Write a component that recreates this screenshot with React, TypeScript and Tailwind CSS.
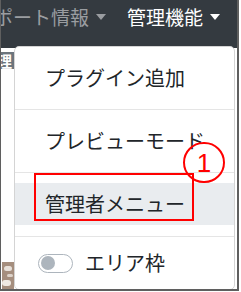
import { useState } from 'react';

const jp = { fontFamily: '"Noto Sans CJK JP", "Noto Sans", sans-serif' };

function Caret({ color }: { color: string }) {
  return (
    <span
      className={`ml-[7px] inline-block h-0 w-0 border-x-[5.5px] border-t-[6px] border-x-transparent ${color}`}
    />
  );
}

export default function App() {
  const [areaFrame, setAreaFrame] = useState(false);

  return (
    <div className="h-[292px] w-[241px] bg-white" style={jp}>
      <div className="relative h-[291px] w-[239px] overflow-hidden border-b-2 border-l border-r-2 border-[#5f5f5f] bg-white">
        {/* Navbar */}
        <div className="flex h-[48px] items-start bg-[#343a40] pt-[5px] text-[19px] leading-[24px]">
          <div className="-ml-[7px] flex items-center text-[#9a9da1]">
            ポート情報
            <Caret color="border-t-[#9a9da1]" />
          </div>
          <div className="ml-[21px] flex items-center text-white">
            管理機能
            <Caret color="border-t-white" />
          </div>
        </div>

        {/* Page content under the menu */}
        <div className="mt-[4px] h-[17px] w-[14px] overflow-hidden bg-[#6c757d] text-[15px] font-bold leading-[17px] text-white">
          <span className="-ml-[4px] block whitespace-nowrap">理</span>
        </div>
        <div className="mt-[193px] ml-px flex h-[28px] w-[12px] flex-col gap-[3px] bg-[#a58e7e] py-[4px]">
          <div className="ml-[2px] h-[5px] w-[8px] rounded-sm bg-[#e8e1da]" />
          <div className="ml-[5px] h-[4px] w-[6px] rounded-sm bg-[#ddd3ca]" />
          <div className="h-[6px] w-[9px] rounded-sm bg-[#efe9e3]" />
        </div>

        {/* Dropdown menu */}
        <div className="absolute left-[13px] top-[46px] w-[221px] rounded-[5px] border border-[#d4d4d4] bg-white text-[20px] text-[#212529]">
          <div className="flex h-[62px] items-center pl-[30px]">プラグイン追加</div>
          <div className="h-px bg-[#e5e5e5]" />
          <div className="flex h-[62px] items-center pl-[30px]">プレビューモード</div>
          <div className="h-px bg-[#e5e5e5]" />
          <div className="mt-[10px] mb-[11px] flex h-[42px] items-center bg-[#e9ecef] pl-[30px]">
            管理者メニュー
          </div>
          <div className="h-px bg-[#e5e5e5]" />
          <button
            onClick={() => setAreaFrame(!areaFrame)}
            className="flex h-[52px] w-full items-center pl-[23px]"
          >
            <span className="flex h-[19px] w-[35px] items-center rounded-full border border-[#adb5bd] px-[2px]">
              <span className="h-[14px] w-[14px] rounded-full bg-[#adb5bd]" />
            </span>
            <span className="ml-[12px]">エリア枠</span>
          </button>
        </div>

        {/* Annotation */}
        <div className="absolute left-[33px] top-[173px] h-[48px] w-[160px] border-2 border-[#ff0000]" />
        <div
          className="absolute left-[182px] top-[142px] flex h-[41px] w-[42px] items-center justify-center rounded-full border-2 border-[#ff0000] pt-px text-[26px] leading-none text-[#ff0000]"
          style={{ fontFamily: '"Liberation Sans", Arial, sans-serif' }}
        >
          1
        </div>
      </div>
    </div>
  );
}
